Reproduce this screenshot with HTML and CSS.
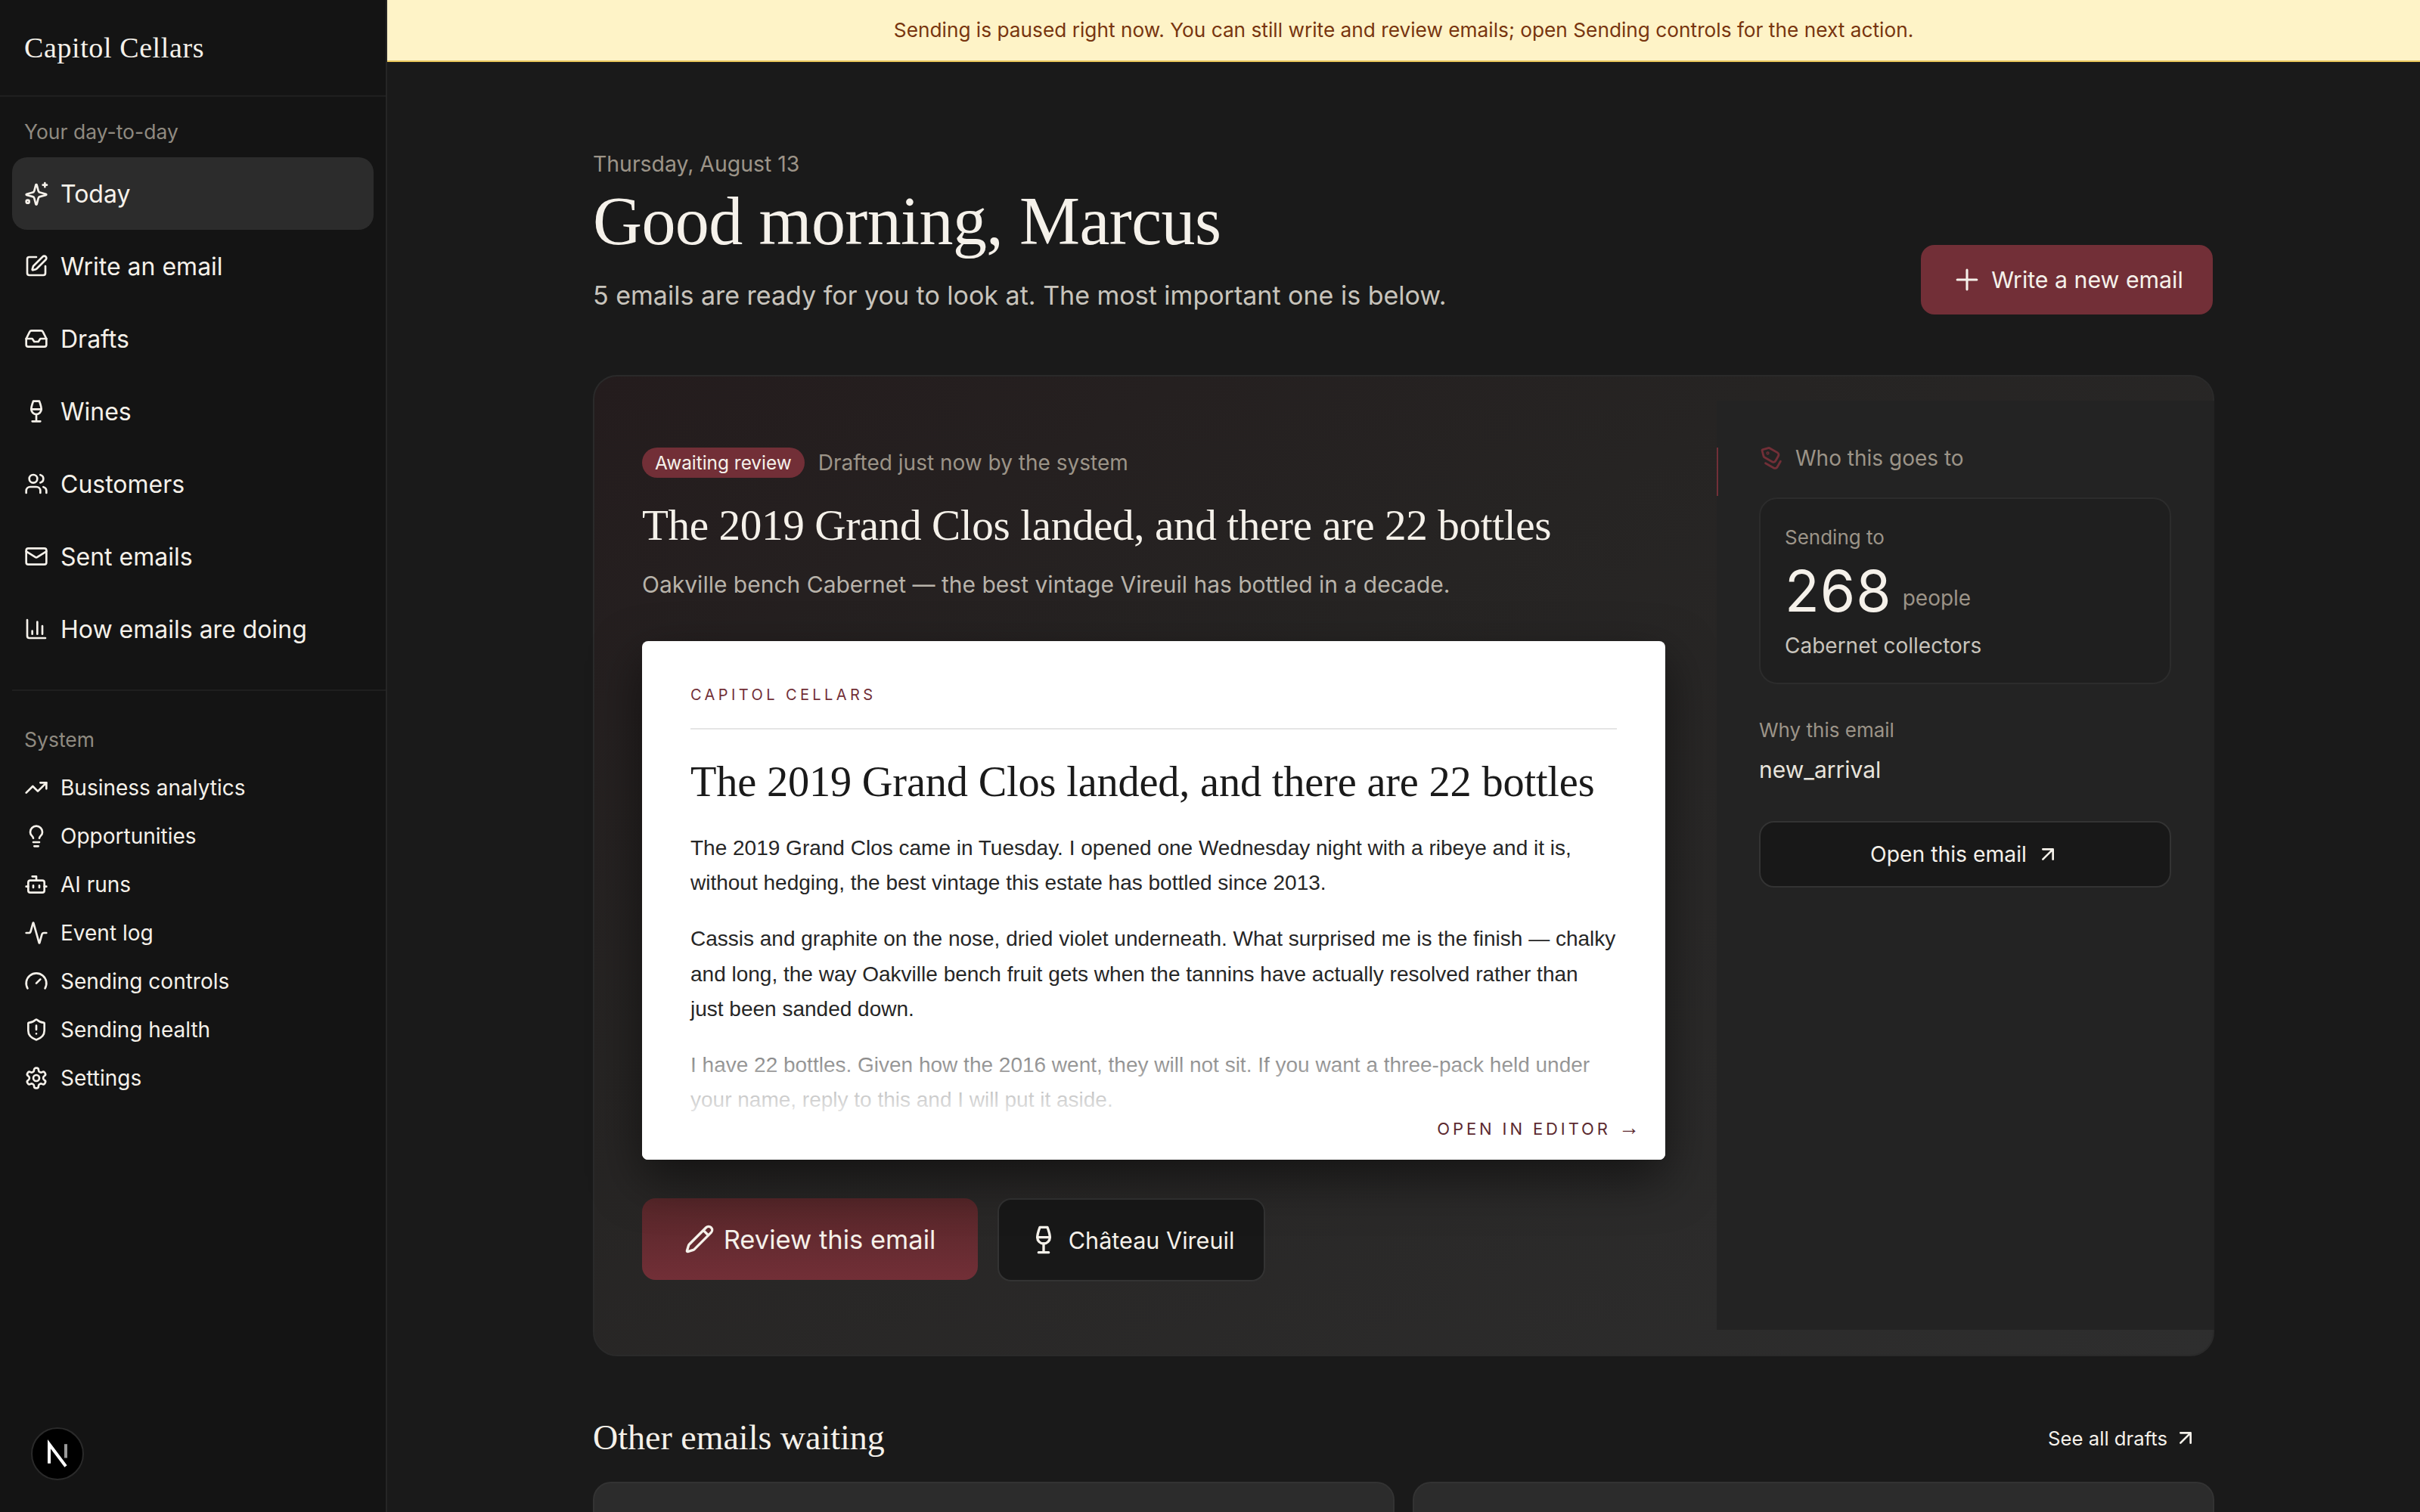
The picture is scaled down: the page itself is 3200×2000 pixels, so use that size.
FILE: index.html
```html
<!DOCTYPE html>
<html lang="en">
<head>
  <meta charset="UTF-8" />
  <title>Capitol Cellars - Today</title>
  <link rel="stylesheet" href="styles.css">
</head>
<body>

  <svg class="sprite" xmlns="http://www.w3.org/2000/svg">
    <symbol id="i-sparkles" viewBox="0 0 24 24"><path d="M9.937 15.5A2 2 0 0 0 8.5 14.063l-6.135-1.582a.5.5 0 0 1 0-.962L8.5 9.936A2 2 0 0 0 9.937 8.5l1.582-6.135a.5.5 0 0 1 .963 0L14.063 8.5A2 2 0 0 0 15.5 9.937l6.135 1.581a.5.5 0 0 1 0 .964L15.5 14.063a2 2 0 0 0-1.437 1.437l-1.582 6.135a.5.5 0 0 1-.963 0z" transform="translate(0 1)"/><path d="M20.500 1.500v4M22.500 3.500h-4"/><circle cx="3.500" cy="20" r="1.500"/></symbol>
    <symbol id="i-pen" viewBox="0 0 24 24"><path d="M12 3H5a2 2 0 0 0-2 2v14a2 2 0 0 0 2 2h14a2 2 0 0 0 2-2v-7"/><path d="M18.375 2.625a1 1 0 0 1 3 3l-9.013 9.014a2 2 0 0 1-.853.505l-2.873.84a.5.5 0 0 1-.62-.62l.84-2.873a2 2 0 0 1 .506-.852z"/></symbol>
    <symbol id="i-inbox" viewBox="0 0 24 24"><polyline points="22 12 16 12 14 15 10 15 8 12 2 12"/><path d="M5.450 5.110 2 12v6a2 2 0 0 0 2 2h16a2 2 0 0 0 2-2v-6l-3.450-6.890A2 2 0 0 0 16.760 4H7.240a2 2 0 0 0-1.790 1.110z"/></symbol>
    <symbol id="i-wine" viewBox="0 0 24 24"><path d="M8 22h8M7 10h10M12 15v7"/><path d="M12 15a5 5 0 0 0 5-5c0-2-.5-4-2-8H9c-1.500 4-2 6-2 8a5 5 0 0 0 5 5Z"/></symbol>
    <symbol id="i-users" viewBox="0 0 24 24"><path d="M16 21v-2a4 4 0 0 0-4-4H6a4 4 0 0 0-4 4v2"/><circle cx="9" cy="7" r="4"/><path d="M22 21v-2a4 4 0 0 0-3-3.870M16 3.130a4 4 0 0 1 0 7.750"/></symbol>
    <symbol id="i-mail" viewBox="0 0 24 24"><rect x="2" y="4" width="20" height="16" rx="2"/><path d="m22 7-8.970 5.700a1.940 1.940 0 0 1-2.060 0L2 7"/></symbol>
    <symbol id="i-chart" viewBox="0 0 24 24"><path d="M3 3v16a2 2 0 0 0 2 2h16M18 17V9M13 17V5M8 17v-3"/></symbol>
    <symbol id="i-trend" viewBox="0 0 24 24"><polyline points="22 7 13.500 15.500 8.500 10.500 2 17"/><polyline points="16 7 22 7 22 13"/></symbol>
    <symbol id="i-bulb" viewBox="0 0 24 24"><path d="M15 14c.2-1 .7-1.700 1.500-2.500 1-.9 1.500-2.200 1.500-3.500A6 6 0 0 0 6 8c0 1 .2 2.200 1.500 3.500.7.7 1.300 1.500 1.500 2.500M9 18h6M10 22h4"/></symbol>
    <symbol id="i-bot" viewBox="0 0 24 24"><path d="M12 8V4H8"/><rect x="4" y="8" width="16" height="12" rx="2"/><path d="M2 14h2M20 14h2M15 13v2M9 13v2"/></symbol>
    <symbol id="i-activity" viewBox="0 0 24 24"><path d="M22 12h-2.480a2 2 0 0 0-1.930 1.460l-2.350 8.360a.25.25 0 0 1-.48 0L9.240 2.180a.25.25 0 0 0-.48 0l-2.350 8.360A2 2 0 0 1 4.490 12H2"/></symbol>
    <symbol id="i-gauge" viewBox="0 0 24 24"><path d="m12 14 4-4M3.340 19a10 10 0 1 1 17.320 0"/></symbol>
    <symbol id="i-shield" viewBox="0 0 24 24"><path d="M20 13c0 5-3.500 7.500-7.660 8.950a1 1 0 0 1-.67-.01C7.500 20.500 4 18 4 13V6a1 1 0 0 1 1-1c2 0 4.500-1.200 6.240-2.720a1.170 1.170 0 0 1 1.520 0C14.510 3.810 17 5 19 5a1 1 0 0 1 1 1zM12 8v4M12 16h.01"/></symbol>
    <symbol id="i-settings" viewBox="0 0 24 24"><path d="M12.220 2h-.44a2 2 0 0 0-2 2v.18a2 2 0 0 1-1 1.730l-.43.25a2 2 0 0 1-2 0l-.15-.08a2 2 0 0 0-2.730.73l-.22.38a2 2 0 0 0 .73 2.730l.15.1a2 2 0 0 1 1 1.720v.51a2 2 0 0 1-1 1.740l-.15.09a2 2 0 0 0-.73 2.730l.22.38a2 2 0 0 0 2.730.73l.15-.08a2 2 0 0 1 2 0l.43.25a2 2 0 0 1 1 1.730V20a2 2 0 0 0 2 2h.44a2 2 0 0 0 2-2v-.18a2 2 0 0 1 1-1.730l.43-.25a2 2 0 0 1 2 0l.15.08a2 2 0 0 0 2.730-.73l.22-.39a2 2 0 0 0-.73-2.730l-.15-.08a2 2 0 0 1-1-1.740v-.5a2 2 0 0 1 1-1.740l.15-.09a2 2 0 0 0 .73-2.730l-.22-.38a2 2 0 0 0-2.730-.73l-.15.08a2 2 0 0 1-2 0l-.43-.25a2 2 0 0 1-1-1.730V4a2 2 0 0 0-2-2z"/><circle cx="12" cy="12" r="3"/></symbol>
    <symbol id="i-tags" viewBox="0 0 24 24"><path d="m15 5 6.300 6.300a2.400 2.400 0 0 1 0 3.400L17 19"/><path d="M9.586 5.586A2 2 0 0 0 8.172 5H3a1 1 0 0 0-1 1v5.172a2 2 0 0 0 .586 1.414L8.290 18.290a2.426 2.426 0 0 0 3.420 0l3.580-3.580a2.426 2.426 0 0 0 0-3.420z"/><circle cx="6.500" cy="9.500" r=".5"/></symbol>
    <symbol id="i-arrow" viewBox="0 0 24 24"><path d="M7 7h10v10M7 17 17 7"/></symbol>
    <symbol id="i-plus" viewBox="0 0 24 24"><path d="M5 12h14M12 5v14"/></symbol>
    <symbol id="i-pencil" viewBox="0 0 24 24"><path d="M21.174 6.812a1 1 0 0 0-3.986-3.987L3.842 16.174a2 2 0 0 0-.5.83l-1.321 4.352a.5.5 0 0 0 .623.622l4.353-1.320a2 2 0 0 0 .83-.497zM15 5l4 4"/></symbol>
  </svg>

  <div class="app">
    <aside class="sidebar">
      <div class="brand">Capitol Cellars</div>

      <div class="nav-group">
        <div class="nav-label">Your day-to-day</div>
        <a href="#" class="nav-item active"><svg class="icon"><use href="#i-sparkles"/></svg>Today</a>
        <a href="#" class="nav-item"><svg class="icon"><use href="#i-pen"/></svg>Write an email</a>
        <a href="#" class="nav-item"><svg class="icon"><use href="#i-inbox"/></svg>Drafts</a>
        <a href="#" class="nav-item"><svg class="icon"><use href="#i-wine"/></svg>Wines</a>
        <a href="#" class="nav-item"><svg class="icon"><use href="#i-users"/></svg>Customers</a>
        <a href="#" class="nav-item"><svg class="icon"><use href="#i-mail"/></svg>Sent emails</a>
        <a href="#" class="nav-item"><svg class="icon"><use href="#i-chart"/></svg>How emails are doing</a>
      </div>

      <div class="nav-group system">
        <div class="nav-label">System</div>
        <a href="#" class="nav-item small"><svg class="icon"><use href="#i-trend"/></svg>Business analytics</a>
        <a href="#" class="nav-item small"><svg class="icon"><use href="#i-bulb"/></svg>Opportunities</a>
        <a href="#" class="nav-item small"><svg class="icon"><use href="#i-bot"/></svg>AI runs</a>
        <a href="#" class="nav-item small"><svg class="icon"><use href="#i-activity"/></svg>Event log</a>
        <a href="#" class="nav-item small"><svg class="icon"><use href="#i-gauge"/></svg>Sending controls</a>
        <a href="#" class="nav-item small"><svg class="icon"><use href="#i-shield"/></svg>Sending health</a>
        <a href="#" class="nav-item small"><svg class="icon"><use href="#i-settings"/></svg>Settings</a>
      </div>
    </aside>

    <div class="main">
      <div class="banner">Sending is paused right now. You can still write and review emails; open Sending controls for the next action.</div>

      <div class="content">
        <header class="page-head">
          <div>
            <div class="date">Thursday, August 13</div>
            <h1 class="greeting">Good morning, Marcus</h1>
            <p class="lead">5 emails are ready for you to look at. The most important one is below.</p>
          </div>
          <a href="#" class="btn btn-wine"><svg class="icon"><use href="#i-plus"/></svg>Write a new email</a>
        </header>

        <section class="hero">
          <div class="hero-main">
            <div class="status-row">
              <span class="pill">Awaiting review</span>
              <span class="status-note">Drafted just now by the system</span>
            </div>
            <h2 class="hero-title">The 2019 Grand Clos landed, and there are 22 bottles</h2>
            <p class="hero-sub">Oakville bench Cabernet — the best vintage Vireuil has bottled in a decade.</p>

            <div class="email">
              <div class="email-brand">CAPITOL CELLARS</div>
              <h3 class="email-title">The 2019 Grand Clos landed, and there are 22 bottles</h3>
              <p>The 2019 Grand Clos came in Tuesday. I opened one Wednesday night with a ribeye and it is, without hedging, the best vintage this estate has bottled since 2013.</p>
              <p>Cassis and graphite on the nose, dried violet underneath. What surprised me is the finish — chalky and long, the way Oakville bench fruit gets when the tannins have actually resolved rather than<br>just been sanded down.</p>
              <p>I have 22 bottles. Given how the 2016 went, they will not sit. If you want a three-pack held under your name, reply to this and I will put it aside.</p>
              <div class="email-fade"></div>
              <a href="#" class="email-open">OPEN IN EDITOR <span class="thin-arrow">→</span></a>
            </div>

            <div class="hero-actions">
              <a href="#" class="btn btn-review"><svg class="icon"><use href="#i-pencil"/></svg>Review this email</a>
              <a href="#" class="btn btn-dark"><svg class="icon"><use href="#i-wine"/></svg>Château Vireuil</a>
            </div>
          </div>

          <aside class="hero-side">
            <div class="side-head"><svg class="icon turned"><use href="#i-tags"/></svg>Who this goes to</div>
            <div class="audience">
              <div class="audience-label">Sending to</div>
              <div class="audience-count"><span class="count">268</span><span class="count-unit">people</span></div>
              <div class="audience-name">Cabernet collectors</div>
            </div>
            <div class="why-label">Why this email</div>
            <div class="why-value">new_arrival</div>
            <a href="#" class="btn-open">Open this email<svg class="icon"><use href="#i-arrow"/></svg></a>
          </aside>
        </section>

        <div class="section-head">
          <h2 class="section-title">Other emails waiting</h2>
          <a href="#" class="see-all">See all drafts<svg class="icon"><use href="#i-arrow"/></svg></a>
        </div>

        <div class="waiting-grid">
          <div class="waiting-card"></div>
          <div class="waiting-card"></div>
        </div>
      </div>
    </div>
  </div>

  <div class="dev-badge">
    <svg viewBox="0 0 24 24" width="44" height="44"><path class="dev-n" d="M6 19V5l12 16"/><path class="dev-n faded" d="M18 5v10"/></svg>
  </div>

</body>
</html>
```

FILE: styles.css
```css
* { margin: 0; padding: 0; box-sizing: border-box; }
html, body { height: 100%; }
body {
  background: #1a1a1a;
  color: #f5f1ea;
  font-family: 'Inter', 'Liberation Sans', sans-serif;
  overflow: hidden;
}
a { color: inherit; text-decoration: none; }
.sprite { display: none; }
.icon {
  fill: none;
  stroke: currentColor;
  stroke-width: 2;
  stroke-linecap: round;
  stroke-linejoin: round;
  flex-shrink: 0;
}
.turned { transform: rotate(-15deg) matrix(0, 1, 1, 0, 0, 0); }

.app {
  display: flex;
  height: 2000px;
}

/* sidebar */
.sidebar {
  width: 512px;
  flex-shrink: 0;
  background: #141414;
  border-right: 2px solid #262626;
}
.brand {
  height: 128px;
  padding: 0 32px;
  display: flex;
  align-items: center;
  border-bottom: 2px solid #1f1f1f;
  font-family: 'Liberation Serif', serif;
  font-size: 38px;
  letter-spacing: 0.6px;
  color: #f5f1ea;
}
.nav-group {
  padding: 28px 16px 0;
}
.nav-label {
  padding: 0 16px;
  font-size: 26.500px;
  line-height: 36px;
  color: #8f8a80;
  margin-bottom: 16px;
}
.nav-item {
  display: flex;
  align-items: center;
  gap: 16px;
  height: 96px;
  padding: 0 16px;
  border-radius: 20px;
  font-size: 32px;
  color: #f5f1ea;
}
.nav-item .icon { width: 32px; height: 32px; }
.nav-item.active { background: #2c2c2c; }
.nav-item.small {
  height: 64px;
  font-size: 28px;
}
.system {
  margin-top: 32px;
  padding-top: 46px;
  border-top: 2px solid #1f1f1f;
  margin-left: 16px;
  padding-left: 0;
  padding-right: 0;
}
.system .nav-label { margin-bottom: 14px; }

/* main column */
.main {
  flex: 1;
  min-width: 0;
}
.banner {
  height: 82px;
  padding-bottom: 2px;
  background: #fef3c7;
  border-bottom: 2px solid #e8c65a;
  display: flex;
  align-items: center;
  justify-content: center;
  font-size: 26.250px;
  color: #78350f;
}
.content {
  width: 2144px;
  margin: 0 auto;
  padding-top: 116px;
}
.page-head {
  display: flex;
  justify-content: space-between;
  align-items: flex-end;
  padding-right: 2px;
  margin-bottom: 82px;
}
.date {
  font-size: 28.400px;
  line-height: 38px;
  color: #9c9488;
}
.greeting {
  font-family: 'Liberation Serif', serif;
  font-weight: 400;
  font-size: 90px;
  line-height: 106px;
  letter-spacing: -0.6px;
  margin-top: 4px;
  color: #f5f1ea;
}
.lead {
  font-size: 34px;
  line-height: 46px;
  margin-top: 22px;
  color: #c8c4bc;
}

.btn {
  display: inline-flex;
  align-items: center;
  justify-content: center;
  border-radius: 18px;
}
.btn-wine {
  width: 386px;
  height: 92px;
  gap: 10px;
  background: #722f37;
  font-size: 30.300px;
  margin-bottom: -2px;
}
.btn-wine .icon { width: 44px; height: 44px; stroke-width: 1.700; }

/* featured email card */
.hero {
  display: flex;
  padding: 32px 0 33px;
  border: 2px solid #2a2a2a;
  border-radius: 32px;
  background: linear-gradient(150deg, #241c1d 0%, #262423 36%, #2e2e2e 100%);
  height: 1298px;
}
.hero-main {
  flex: 1;
  min-width: 0;
  padding: 62px 68px 0 63px;
}
.status-row {
  display: flex;
  align-items: center;
  gap: 18px;
}
.pill {
  height: 40px;
  padding: 0 17px;
  display: inline-flex;
  align-items: center;
  border-radius: 20px;
  background: #722f37;
  font-size: 24.400px;
}
.status-note {
  font-size: 28px;
  color: #9c9488;
}
.hero-title {
  font-family: 'Liberation Serif', serif;
  font-weight: 400;
  font-size: 57.200px;
  line-height: 70px;
  letter-spacing: -0.4px;
  margin-top: 28px;
}
.hero-sub {
  font-size: 30px;
  line-height: 42px;
  margin-top: 22px;
  color: #b8b3aa;
}

.email {
  position: relative;
  height: 686px;
  margin-top: 54px;
  padding: 57px 64px 0;
  overflow: hidden;
  background: #fff;
  border-radius: 8px;
  box-shadow: 0 24px 64px rgba(0, 0, 0, 0.5);
  color: #262626;
  font-family: 'Liberation Sans', Arial, sans-serif;
  font-size: 28px;
  line-height: 46.200px;
}
.email p { margin-bottom: 28px; }
.email-brand {
  padding-bottom: 30px;
  border-bottom: 2px solid #e5e5e5;
  font-family: 'Inter', sans-serif;
  font-size: 20px;
  line-height: 28px;
  letter-spacing: 4.400px;
  color: #722f37;
}
.email-title {
  font-family: 'Liberation Serif', serif;
  font-weight: 400;
  font-size: 56.400px;
  line-height: 68px;
  letter-spacing: -0.2px;
  margin: 35px 0 31px;
  color: #1a1a1a;
}
.email-fade {
  position: absolute;
  left: 0;
  right: 0;
  bottom: 0;
  height: 180px;
  background: linear-gradient(to bottom, rgba(255, 255, 255, 0.2), #fff 76%);
}
.email-open {
  position: absolute;
  right: 34px;
  bottom: 27px;
  font-family: 'Inter', sans-serif;
  font-size: 22px;
  line-height: 28px;
  letter-spacing: 3.900px;
  color: #5c2a30;
}
.thin-arrow {
  font-family: 'Liberation Sans', sans-serif;
  font-size: 28px;
  line-height: 0;
  letter-spacing: 0;
}

.hero-actions {
  display: flex;
  gap: 26px;
  margin-top: 51px;
}
.btn-review {
  width: 444px;
  height: 108px;
  gap: 12px;
  background: linear-gradient(to bottom, #562629, #722f37);
  font-size: 34.500px;
}
.btn-review .icon { width: 40px; height: 40px; }
.btn-dark {
  width: 354px;
  height: 110px;
  gap: 13px;
  background: #181818;
  border: 2px solid #333;
  font-size: 30.600px;
}
.btn-dark .icon { width: 40px; height: 40px; }

/* who this goes to */
.hero-side {
  position: relative;
  width: 658px;
  margin-right: -2px;
  flex-shrink: 0;
  padding: 58px 57px 0 56px;
  background: #232323;
}
.hero-side::before {
  content: '';
  position: absolute;
  left: 0;
  top: 62px;
  width: 2px;
  height: 64px;
  background: #722f37;
}
.side-head {
  display: flex;
  align-items: center;
  gap: 14px;
  font-size: 28px;
  line-height: 36px;
  color: #9c9488;
}
.side-head .icon {
  width: 34px;
  height: 34px;
  color: #722f37;
}
.audience {
  height: 247px;
  margin-top: 34px;
  padding: 34px 32px 0;
  background: #1f1f1f;
  border: 2px solid #2c2c2c;
  border-radius: 24px;
}
.audience-label {
  font-size: 26px;
  line-height: 34px;
  color: #9c9488;
}
.audience-count {
  display: flex;
  align-items: flex-end;
  gap: 14px;
  margin-top: 10px;
}
.count {
  font-size: 75px;
  line-height: 88px;
  letter-spacing: 1px;
}
.count-unit {
  font-size: 28px;
  line-height: 36px;
  margin-bottom: 17px;
  color: #9c9488;
}
.audience-name {
  font-size: 28px;
  line-height: 36px;
  margin-top: 10px;
  color: #c8c4bc;
}
.why-label {
  font-size: 26px;
  line-height: 34px;
  margin-top: 44px;
  color: #9c9488;
}
.why-value {
  font-size: 30px;
  line-height: 40px;
  margin-top: 15px;
  color: #e8e4dc;
}
.btn-open {
  display: flex;
  align-items: center;
  justify-content: center;
  gap: 12px;
  height: 88px;
  margin-top: 48px;
  background: #181818;
  border: 2px solid #333;
  border-radius: 20px;
  font-size: 28.300px;
}
.btn-open .icon { width: 32px; height: 32px; }

/* other emails */
.section-head {
  display: flex;
  align-items: center;
  justify-content: space-between;
  padding-right: 22px;
  margin-top: 78px;
}
.section-title {
  font-family: 'Liberation Serif', serif;
  font-weight: 400;
  font-size: 46px;
  line-height: 60px;
}
.see-all {
  display: flex;
  align-items: center;
  gap: 8px;
  font-size: 25.700px;
}
.see-all .icon { width: 32px; height: 32px; }
.waiting-grid {
  display: grid;
  grid-template-columns: 1fr 1fr;
  gap: 24px;
  margin-top: 28px;
}
.waiting-card {
  height: 240px;
  background: #2c2c2c;
  border: 2px solid #333;
  border-radius: 24px;
}

/* little round badge, bottom left */
.dev-badge {
  position: fixed;
  left: 41px;
  bottom: 42px;
  width: 70px;
  height: 70px;
  display: flex;
  align-items: center;
  justify-content: center;
  background: #000;
  border: 2px solid #2a2a2a;
  border-radius: 50%;
}
.dev-n {
  fill: none;
  stroke: #fff;
  stroke-width: 2.200;
}
.dev-n.faded { opacity: 0.6; }
```
